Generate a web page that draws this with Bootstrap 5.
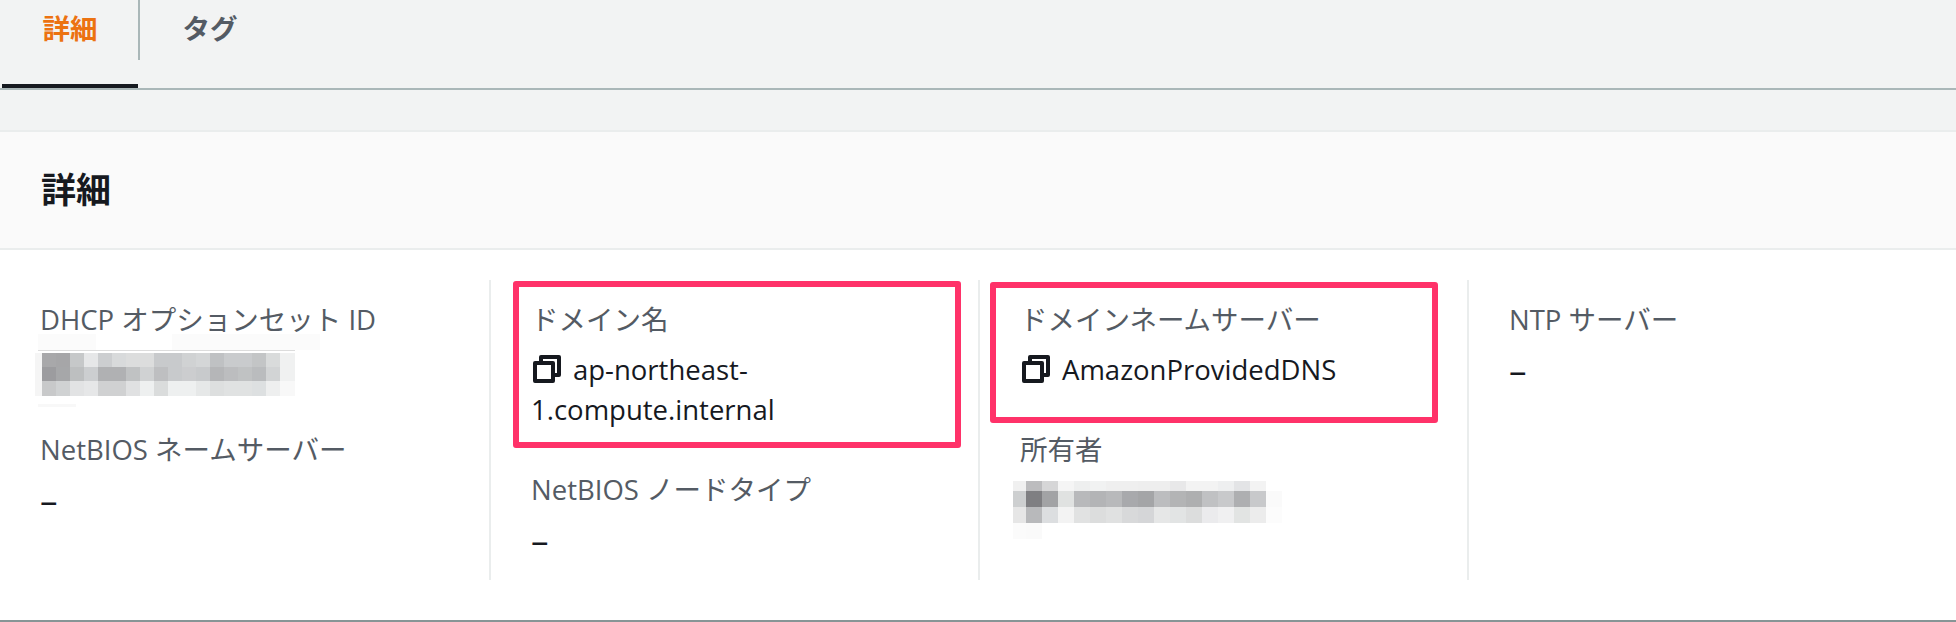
<!DOCTYPE html>
<html lang="ja">
<head>
<meta charset="utf-8">
<title>詳細</title>
<link href="https://cdn.jsdelivr.net/npm/bootstrap@5.3.0/dist/css/bootstrap.min.css" rel="stylesheet">
<style>
html, body { height: 622px; overflow: hidden; }
body { background: #f2f3f3; font-family: "Open Sans", "Noto Sans CJK JP", sans-serif; font-size: 27.5px; line-height: 40px; color: #16191f; }
.tabbar { height: 90px; border-bottom: 2px solid #aab7b8; padding-left: 2px; }
.tabitem { height: 88px; line-height: 58px; font-weight: 700; color: #545b64; text-align: center; text-decoration: none; }
.tabitem-first { width: 136px; color: #ec7211; border-bottom: 4px solid #16191f; }
.tabitem-next { width: 140px; }
.tabsep { width: 2px; height: 60px; background: #aab7b8; }
.panel-wrap { margin-top: 40px; background: #fff; border-bottom: 2px solid #879596; border-top: 2px solid #eaeded; height: 492px; }
.panel-head { background: #fafafa; height: 118px; border-bottom: 2px solid #eaeded; padding-left: 41px; font-size: 35px; line-height: 116px; font-weight: 700; margin: 0; color: #16191f; }
.panel-body-area { padding-top: 30px; }
.kv-col { height: 300px; padding: 20px 40px 0 40px; position: relative; }
.kv-col + .kv-col { border-left: 2px solid #eaeded; }
.kv-item { margin-bottom: 40px; }
.kv-label { color: #545b64; margin-bottom: 10px; }
.kv-dash { font-size: 35px; font-weight: 500; }
.kv-icon { width: 28px; height: 28px; vertical-align: -3px; margin-right: 12px; margin-left: 2px; }
.mosaic-a { display: block; width: 290px; height: 80px; margin: -20px 0 -20px -10px; }
.mosaic-b { display: block; width: 300px; height: 64px; margin: -4px 0 0 -15px; }
.mark-box { position: absolute; border: 6px solid #ff3269; border-radius: 3px; width: 448px; }
.mark-a { left: 22px; top: 1px; height: 167px; }
.mark-b { left: 10px; top: 2px; height: 141px; }
</style>
</head>
<body>
<nav class="tabbar d-flex align-items-start">
  <a class="tabitem tabitem-first" href="#">詳細</a>
  <span class="tabsep"></span>
  <a class="tabitem tabitem-next" href="#">タグ</a>
</nav>
<section class="panel-wrap">
  <h2 class="panel-head">詳細</h2>
  <div class="panel-body-area">
    <div class="row g-0">
      <div class="col-3 kv-col">
        <div class="kv-item">
          <div class="kv-label">DHCP オプションセット ID</div>
          <svg class="mosaic-a" viewBox="30 330 290 80" aria-hidden="true" shape-rendering="crispEdges">
            <rect x="38" y="334" width="58" height="16" fill="#fbfbfb"/><rect x="172" y="334" width="153" height="16" fill="#fbfbfb"/>
            <rect x="38" y="350" width="257" height="1" fill="#dcdcdc"/>
            <rect x="35" y="353" width="7" height="43" fill="#f5f5f5"/>
            <rect x="42" y="353" width="14" height="14" fill="#a8a8aa"/><rect x="56" y="353" width="14" height="14" fill="#a6a6a8"/><rect x="70" y="353" width="14" height="14" fill="#c6c8c9"/><rect x="84" y="353" width="14" height="14" fill="#e6e7e8"/><rect x="98" y="353" width="14" height="14" fill="#ccced0"/><rect x="112" y="353" width="14" height="14" fill="#d8dadb"/><rect x="126" y="353" width="28" height="14" fill="#dcdddd"/><rect x="154" y="353" width="28" height="14" fill="#c8cacc"/><rect x="182" y="353" width="14" height="14" fill="#d0d2d3"/><rect x="196" y="353" width="14" height="14" fill="#d4d6d7"/><rect x="210" y="353" width="14" height="14" fill="#bfc1c3"/><rect x="224" y="353" width="28" height="14" fill="#c9cbcd"/><rect x="252" y="353" width="14" height="14" fill="#c3c5c6"/><rect x="266" y="353" width="14" height="14" fill="#d9dbdb"/><rect x="280" y="353" width="15" height="14" fill="#f0f1f1"/>
            <rect x="42" y="367" width="14" height="14" fill="#9c9c9f"/><rect x="56" y="367" width="14" height="14" fill="#a6a7a9"/><rect x="70" y="367" width="14" height="14" fill="#bdbfc0"/><rect x="84" y="367" width="14" height="14" fill="#ccced0"/><rect x="98" y="367" width="28" height="14" fill="#b0b1b3"/><rect x="126" y="367" width="14" height="14" fill="#c0c2c3"/><rect x="140" y="367" width="14" height="14" fill="#d0d2d3"/><rect x="154" y="367" width="14" height="14" fill="#bebfc1"/><rect x="168" y="367" width="14" height="14" fill="#c8cacc"/><rect x="182" y="367" width="14" height="14" fill="#cccdcf"/><rect x="196" y="367" width="14" height="14" fill="#c8cacc"/><rect x="210" y="367" width="14" height="14" fill="#b5b6b8"/><rect x="224" y="367" width="14" height="14" fill="#bcbdbf"/><rect x="238" y="367" width="14" height="14" fill="#c0c2c3"/><rect x="252" y="367" width="14" height="14" fill="#babcbe"/><rect x="266" y="367" width="14" height="14" fill="#d2d4d5"/><rect x="280" y="367" width="15" height="14" fill="#f0f1f1"/>
            <rect x="42" y="381" width="14" height="15" fill="#c8c9ca"/><rect x="56" y="381" width="14" height="15" fill="#d0d2d3"/><rect x="70" y="381" width="14" height="15" fill="#e2e3e4"/><rect x="84" y="381" width="14" height="15" fill="#e6e7e8"/><rect x="98" y="381" width="28" height="15" fill="#d0d1d2"/><rect x="126" y="381" width="14" height="15" fill="#e0e1e2"/><rect x="140" y="381" width="14" height="15" fill="#eef0f0"/><rect x="154" y="381" width="14" height="15" fill="#dadcdc"/><rect x="168" y="381" width="28" height="15" fill="#eef0f0"/><rect x="196" y="381" width="14" height="15" fill="#e6e8e8"/><rect x="210" y="381" width="14" height="15" fill="#dddfdf"/><rect x="224" y="381" width="28" height="15" fill="#e0e2e2"/><rect x="252" y="381" width="14" height="15" fill="#dde0e1"/><rect x="266" y="381" width="14" height="15" fill="#eeefef"/><rect x="280" y="381" width="15" height="15" fill="#f8f8f8"/>
            <rect x="38" y="404" width="38" height="3" fill="#f8f8f8"/>
          </svg>
        </div>
        <div class="kv-item">
          <div class="kv-label">NetBIOS ネームサーバー</div>
          <div class="kv-dash">–</div>
        </div>
      </div>
      <div class="col-3 kv-col">
        <div class="kv-item">
          <div class="kv-label">ドメイン名</div>
          <div><svg class="kv-icon" viewBox="0 0 28 28" fill="none" stroke="#16191f" stroke-width="4" stroke-linejoin="round" aria-hidden="true"><rect x="2" y="8" width="18" height="18"/><path d="M8 6V2H26V20H22"/></svg>ap-northeast-<br>1.compute.internal</div>
        </div>
        <div class="kv-item">
          <div class="kv-label">NetBIOS ノードタイプ</div>
          <div class="kv-dash">–</div>
        </div>
        <div class="mark-box mark-a"></div>
      </div>
      <div class="col-3 kv-col">
        <div class="kv-item">
          <div class="kv-label">ドメインネームサーバー</div>
          <div><svg class="kv-icon" viewBox="0 0 28 28" fill="none" stroke="#16191f" stroke-width="4" stroke-linejoin="round" aria-hidden="true"><rect x="2" y="8" width="18" height="18"/><path d="M8 6V2H26V20H22"/></svg>AmazonProvidedDNS</div>
        </div>
        <div class="kv-item">
          <div class="kv-label">所有者</div>
          <svg class="mosaic-b" viewBox="1005 476 300 64" aria-hidden="true" shape-rendering="crispEdges">
            <rect x="1013" y="481" width="13" height="58" fill="#f0f0f0"/><rect x="1013" y="491" width="13" height="16" fill="#cdcfd0"/><rect x="1013" y="507" width="13" height="16" fill="#e6e6e6"/><rect x="1013" y="523" width="13" height="16" fill="#fbfbfb"/>
            <rect x="1026" y="481" width="16" height="10" fill="#bcbcbe"/><rect x="1042" y="481" width="16" height="10" fill="#d6d6d7"/><rect x="1058" y="481" width="16" height="10" fill="#f5f5f5"/><rect x="1074" y="481" width="16" height="10" fill="#eeefef"/><rect x="1090" y="481" width="16" height="10" fill="#f1f2f2"/><rect x="1106" y="481" width="32" height="10" fill="#efefef"/><rect x="1138" y="481" width="32" height="10" fill="#eeeeee"/><rect x="1170" y="481" width="16" height="10" fill="#e8e8e9"/><rect x="1186" y="481" width="32" height="10" fill="#f3f3f3"/><rect x="1218" y="481" width="16" height="10" fill="#eeeff0"/><rect x="1234" y="481" width="16" height="10" fill="#e3e4e6"/><rect x="1250" y="481" width="16" height="10" fill="#f3f3f3"/>
            <rect x="1026" y="491" width="16" height="16" fill="#7f7f82"/><rect x="1042" y="491" width="16" height="16" fill="#a2a3a5"/><rect x="1058" y="491" width="16" height="16" fill="#e0e2e1"/><rect x="1074" y="491" width="16" height="16" fill="#b8b9bb"/><rect x="1090" y="491" width="16" height="16" fill="#b3b4b6"/><rect x="1106" y="491" width="16" height="16" fill="#b8b9bb"/><rect x="1122" y="491" width="16" height="16" fill="#a8a9ac"/><rect x="1138" y="491" width="16" height="16" fill="#a4a5a7"/><rect x="1154" y="491" width="16" height="16" fill="#bcbdbf"/><rect x="1170" y="491" width="16" height="16" fill="#b3b4b5"/><rect x="1186" y="491" width="16" height="16" fill="#aeafb0"/><rect x="1202" y="491" width="16" height="16" fill="#c0c1c3"/><rect x="1218" y="491" width="16" height="16" fill="#c8c9cb"/><rect x="1234" y="491" width="16" height="16" fill="#aeafb1"/><rect x="1250" y="491" width="16" height="16" fill="#c8c9cb"/><rect x="1266" y="491" width="16" height="16" fill="#fafafa"/>
            <rect x="1026" y="507" width="16" height="16" fill="#b8b9bb"/><rect x="1042" y="507" width="16" height="16" fill="#dcdee0"/><rect x="1058" y="507" width="16" height="16" fill="#f3f3f3"/><rect x="1074" y="507" width="16" height="16" fill="#e1e2e2"/><rect x="1090" y="507" width="16" height="16" fill="#dcdddd"/><rect x="1106" y="507" width="16" height="16" fill="#e0e1e1"/><rect x="1122" y="507" width="16" height="16" fill="#d8d9da"/><rect x="1138" y="507" width="16" height="16" fill="#d5d6d8"/><rect x="1154" y="507" width="16" height="16" fill="#e6e7e7"/><rect x="1170" y="507" width="16" height="16" fill="#e2e4e4"/><rect x="1186" y="507" width="16" height="16" fill="#dcdddd"/><rect x="1202" y="507" width="16" height="16" fill="#ebebed"/><rect x="1218" y="507" width="16" height="16" fill="#f0f0f1"/><rect x="1234" y="507" width="16" height="16" fill="#e2e4e3"/><rect x="1250" y="507" width="16" height="16" fill="#ececec"/><rect x="1266" y="507" width="16" height="16" fill="#fcfcfc"/>
            <rect x="1026" y="523" width="16" height="16" fill="#fafafa"/>
          </svg>
        </div>
        <div class="mark-box mark-b"></div>
      </div>
      <div class="col-3 kv-col">
        <div class="kv-item">
          <div class="kv-label">NTP サーバー</div>
          <div class="kv-dash">–</div>
        </div>
      </div>
    </div>
  </div>
</section>
<script src="https://cdn.jsdelivr.net/npm/bootstrap@5.3.0/dist/js/bootstrap.bundle.min.js"></script>
</body>
</html>
